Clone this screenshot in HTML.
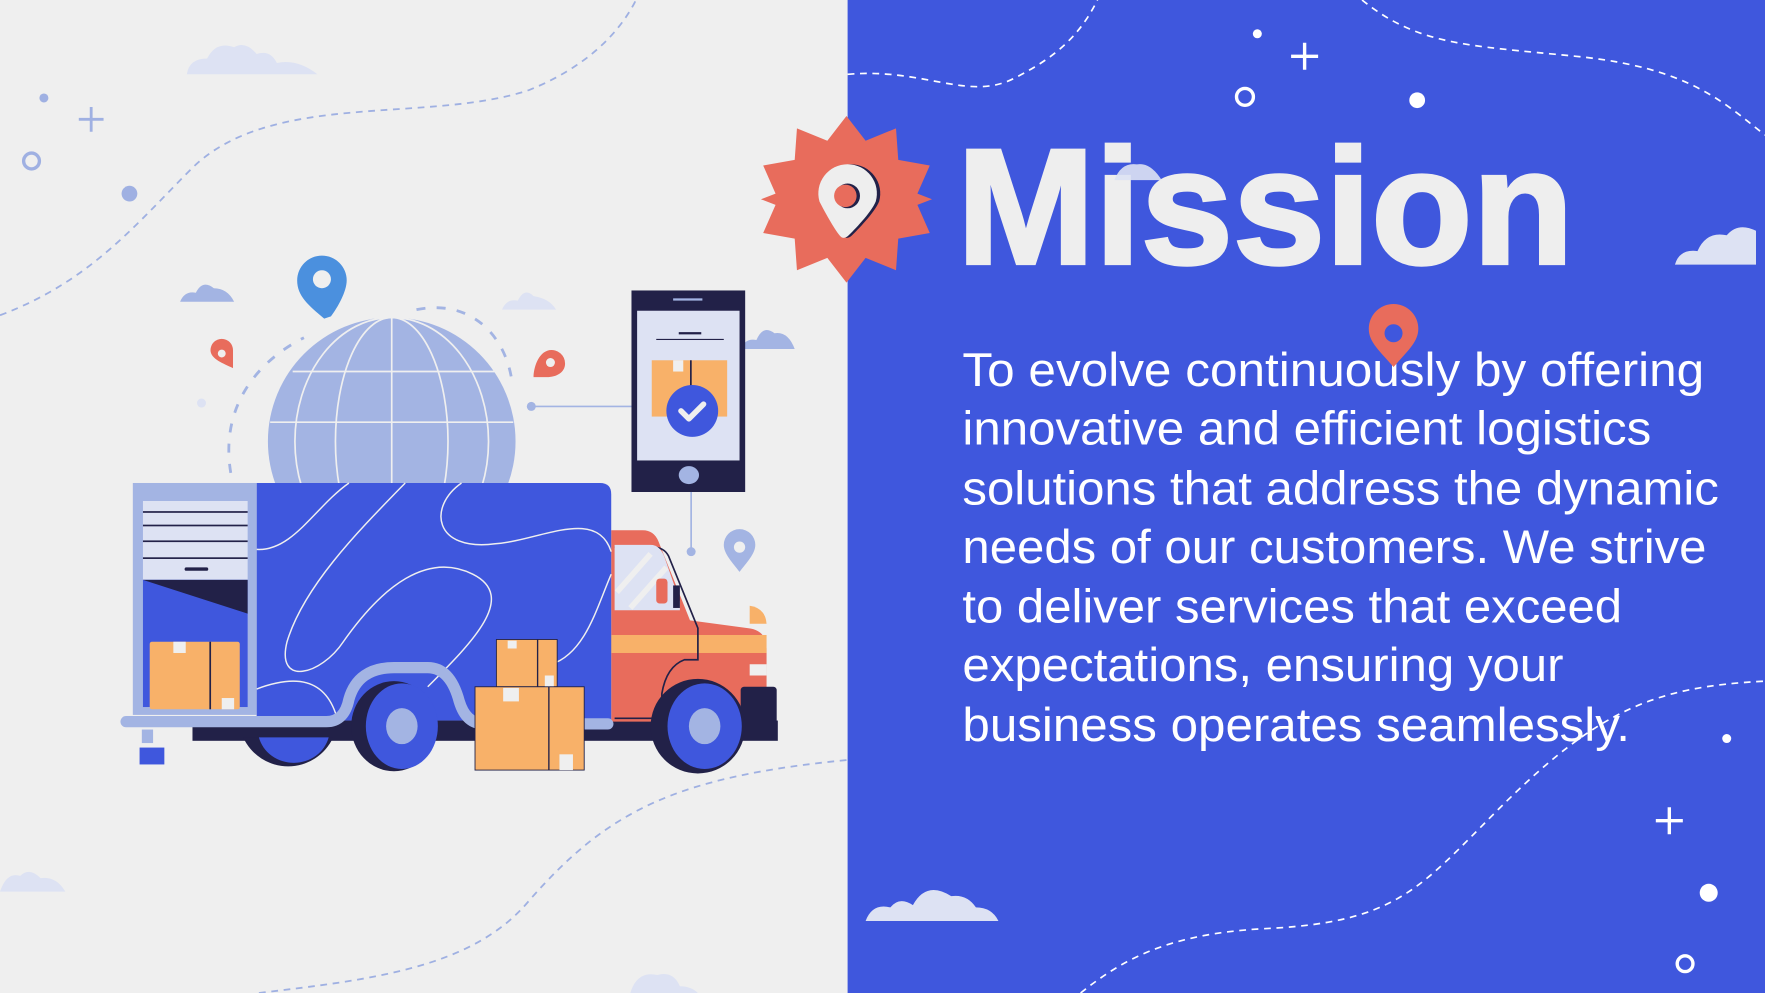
<!DOCTYPE html>
<html><head><meta charset="utf-8"><style>
html,body{margin:0;padding:0;background:#efefef;overflow:hidden}
svg{display:block}
</style></head><body>
<svg width="1765" height="993" viewBox="0 0 1568 882" preserveAspectRatio="none" xmlns="http://www.w3.org/2000/svg">
<rect width="1568" height="882" fill="#efefef"/>
<rect x="753" y="0" width="815" height="882" fill="#3f57dd"/>
<g fill="none" stroke="#9fb0e2" stroke-width="1.6" stroke-dasharray="6 5">
<path d="M0,280 C80,250 120,200 170,150 C240,80 380,110 470,80 C520,60 550,30 565,0"/>
<path d="M230,882 C330,870 420,860 470,800 C540,720 600,690 753,675"/>
</g>
<g fill="none" stroke="#ffffff" stroke-width="1.5" stroke-dasharray="6 5">
<path d="M753,66 C820,60 860,90 900,70 C940,50 960,30 975,0"/>
<path d="M1210,0 C1260,40 1300,40 1400,50 C1500,60 1530,90 1568,120"/>
<path d="M960,882 C1000,850 1040,830 1120,825 C1240,820 1260,790 1330,720 C1420,630 1470,610 1568,605"/>
</g>
<g fill="#9fb0e2" stroke="#9fb0e2">
<circle cx="39" cy="87" r="4" stroke="none"/>
<circle cx="115" cy="172" r="7" stroke="none"/>
<circle cx="28" cy="143" r="7" fill="none" stroke-width="3"/>
<path d="M70,106h22M81,95v22" stroke-width="2.5" fill="none"/>
</g>
<g fill="#dde2f3">
<path d="M166,66 q2,-14 18,-14 q8,-16 24,-10 q10,-6 20,6 q12,-4 18,8 q18,-4 36,10z"/>
<path d="M0,792 q6,-18 18,-14 q8,-8 18,2 q14,-2 22,12z"/>
<path d="M560,882 q6,-20 24,-16 q14,-4 20,10 q10,0 16,6z"/>
<path d="M446,275 q4,-10 14,-8 q6,-12 14,-4 q14,2 20,12z"/>
</g>
<g fill="#a3b4e3">
<path d="M160,268 q4,-10 14,-8 q6,-12 16,-4 q12,0 18,12z"/>
<path d="M658,310 q4,-10 14,-8 q6,-14 16,-6 q12,-2 18,14z"/>
</g>
<g fill="#fff" stroke="#fff">
<circle cx="1117" cy="30" r="4" stroke="none"/>
<circle cx="1259" cy="89" r="7" stroke="none"/>
<circle cx="1106" cy="86" r="7.5" fill="none" stroke-width="3"/>
<path d="M1147,50h24M1159,38v24" stroke-width="3" fill="none"/>
<circle cx="1534" cy="656" r="4" stroke="none"/>
<circle cx="1518" cy="793" r="8" stroke="none"/>
<circle cx="1497" cy="856" r="7" fill="none" stroke-width="3"/>
<path d="M1471,729h24M1483,717v24" stroke-width="3" fill="none"/>
</g>
<g fill="#dde2f3">
<path d="M769,818 q6,-16 22,-12 q8,-10 20,-2 q12,-22 34,-8 q14,-2 22,10 q14,0 20,12z"/>
<path d="M1488,235 q4,-14 20,-12 q8,-18 26,-14 q10,-12 26,-4 v30z"/>
</g>
<text x="850" y="234" font-family="Liberation Sans, sans-serif" font-weight="bold" font-size="146" fill="#eeeeee" stroke="#eeeeee" stroke-width="3" textLength="548" lengthAdjust="spacingAndGlyphs">Mission</text>
<path d="M990,160 q6,-16 20,-14 q12,-2 22,14z" fill="#dde2f3" opacity="0.9"/>
<g font-family="Liberation Sans, sans-serif" font-size="42" fill="#ffffff" lengthAdjust="spacingAndGlyphs">
<text x="855" y="343" textLength="659" lengthAdjust="spacingAndGlyphs">To evolve continuously by offering</text>
<text x="855" y="395" textLength="612" lengthAdjust="spacingAndGlyphs">innovative and efficient logistics</text>
<text x="855" y="448" textLength="672" lengthAdjust="spacingAndGlyphs">solutions that address the dynamic</text>
<text x="855" y="500" textLength="661" lengthAdjust="spacingAndGlyphs">needs of our customers. We strive</text>
<text x="855" y="553" textLength="586" lengthAdjust="spacingAndGlyphs">to deliver services that exceed</text>
<text x="855" y="605" textLength="534" lengthAdjust="spacingAndGlyphs">expectations, ensuring your</text>
<text x="855" y="658" textLength="593" lengthAdjust="spacingAndGlyphs">business operates seamlessly.</text>
</g>
<path d="M1238,326 c-12,-14 -22,-22 -22,-34 a22,22 0 0 1 44,0 c0,12 -10,20 -22,34z" fill="#e86c5c"/>
<circle cx="1238" cy="296" r="8" fill="#3f57dd"/>
<polygon fill="#e86c5c" points="752,103 769,125 796,114 798,142 826,147 815,172 828,177 815,182 826,207 798,212 796,240 769,229 752,251 735,229 708,240 706,212 678,207 689,182 676,177 689,172 678,147 706,142 708,114 735,125"/>
<path d="M748,211 c-4,-2 -16,-24 -20,-32 a26,26 0 1 1 50,0 c-4,10 -20,26 -24,30 q-3,3 -6,2z" fill="#222148" transform="translate(3,0)"/>
<path d="M748,211 c-4,-2 -16,-24 -20,-32 a26,26 0 1 1 50,0 c-4,10 -20,26 -24,30 q-3,3 -6,2z" fill="#eeeeee"/>
<circle cx="753" cy="174" r="11" fill="#222148"/>
<circle cx="751" cy="174" r="10" fill="#e86c5c"/>
<circle cx="348" cy="392" r="110" fill="#a3b4e3"/>
<g fill="none" stroke="#efefef" stroke-width="1.5">
<ellipse cx="348" cy="392" rx="86" ry="110"/>
<ellipse cx="348" cy="392" rx="50" ry="110"/>
<path d="M348,282v150M260,330h180M240,375h216"/>
</g>
<g fill="none" stroke="#a3b4e3" stroke-width="2.5" stroke-dasharray="8 10">
<path d="M205,420 C195,360 230,320 270,300 M370,275 C420,265 450,300 455,340"/>
</g>
<line x1="472" y1="361" x2="562" y2="361" stroke="#a3b4e3" stroke-width="1.5"/>
<circle cx="472" cy="361" r="4" fill="#a3b4e3"/>
<circle cx="179" cy="358" r="4" fill="#dde2f3"/>
<line x1="614" y1="435" x2="614" y2="490" stroke="#a3b4e3" stroke-width="1.5"/>
<circle cx="614" cy="490" r="4" fill="#a3b4e3"/>
<path d="M288,283 c-14,-12 -24,-20 -24,-34 a22,22 0 0 1 44,0 c0,10 -8,24 -14,32z" fill="#4b90de"/>
<circle cx="286" cy="248" r="8" fill="#efefef"/>
<path d="M207,327 c-8,-4 -20,-8 -20,-16 a10,10 0 0 1 20,0z" fill="#e86c5c"/>
<circle cx="197" cy="314" r="3.5" fill="#efefef"/>
<path d="M474,335 c0,-8 4,-22 14,-24 a12,12 0 0 1 14,12 c0,8 -8,12 -16,12z" fill="#e86c5c"/>
<circle cx="489" cy="322" r="4" fill="#efefef"/>
<path d="M657,508 c-6,-8 -14,-16 -14,-24 a14,14 0 0 1 28,0 c0,8 -8,16 -14,24z" fill="#a3b4e3"/>
<circle cx="657" cy="486" r="5" fill="#efefef"/>
<rect x="561" y="258" width="101" height="179" fill="#222148"/>
<rect x="566" y="276" width="91" height="133" fill="#dde2f3"/>
<rect x="598" y="265" width="26" height="2" fill="#a3b4e3"/>
<rect x="603" y="295" width="20" height="2" fill="#222148"/>
<rect x="583" y="301" width="60" height="1" fill="#222148"/>
<rect x="579" y="320" width="67" height="50" fill="#f8b169"/>
<rect x="598" y="320" width="9" height="10" fill="#efefef"/>
<rect x="613" y="320" width="1.5" height="30" fill="#222148"/>
<circle cx="615" cy="365" r="23" fill="#3f57dd"/>
<path d="M605,365 l7,7 l13,-13" stroke="#efefef" stroke-width="5" fill="none" stroke-linecap="round" stroke-linejoin="round"/>
<ellipse cx="612" cy="422" rx="9" ry="8" fill="#a3b4e3"/>
<rect x="171" y="640" width="520" height="18" fill="#222148"/>
<path d="M543,471 h28 q10,0 14,10 l28,70 l52,7 q16,2 16,18 v65 h-138z" fill="#e86c5c"/>
<rect x="543" y="564" width="138" height="16" fill="#f8b169"/>
<path d="M666,538 q14,2 15,16 h-15z" fill="#f8b169"/>
<path d="M546,486 h34 q10,0 14,8 l26,64 v28 h-12 q-16,6 -20,30 v22 h-42" fill="none" stroke="#222148" stroke-width="1.5"/>
<path d="M546,484 h32 q8,0 12,10 l14,40 v8 h-58z" fill="#dde2f3"/>
<path d="M548,526 l30,-34 M560,540 l32,-36" stroke="#efefef" stroke-width="5"/>
<rect x="583" y="514" width="10" height="22" rx="3" fill="#e86c5c"/>
<rect x="598" y="520" width="6" height="20" fill="#222148"/>
<rect x="666" y="590" width="15" height="10" fill="#efefef"/>
<rect x="658" y="610" width="32" height="38" rx="3" fill="#222148"/>
<path d="M228,429 h305 q10,0 10,10 v201 h-315z" fill="#3f57dd"/>
<g fill="none" stroke="#efefef" stroke-width="1.3">
<path d="M228,488 C260,490 280,450 310,429"/>
<path d="M360,429 C320,470 270,520 255,570 C245,610 285,600 305,570 C340,520 380,490 420,510 C460,530 420,570 380,610"/>
<path d="M410,429 C380,450 385,490 440,483 C480,480 530,450 543,490"/>
<path d="M228,612 C260,600 290,600 300,640"/>
<path d="M543,510 C530,540 520,580 490,590"/>
</g>
<rect x="118" y="429" width="110" height="206" fill="#a3b4e3"/>
<rect x="127" y="445" width="93" height="70" fill="#dde2f3"/>
<g fill="#222148">
<rect x="127" y="454" width="93" height="1.5"/><rect x="127" y="466" width="93" height="1.5"/>
<rect x="127" y="480" width="93" height="1.5"/><rect x="127" y="495" width="93" height="1.5"/>
<rect x="164" y="504" width="21" height="3" rx="1.5"/>
</g>
<rect x="127" y="515" width="93" height="113" fill="#3f57dd"/>
<path d="M127,515 h93 v30z" fill="#222148"/>
<rect x="133" y="570" width="80" height="60" rx="2" fill="#f8b169"/>
<rect x="154" y="570" width="11" height="10" fill="#efefef"/>
<rect x="186" y="570" width="1.5" height="60" fill="#222148"/>
<rect x="197" y="620" width="11" height="10" fill="#efefef"/>
<rect x="126" y="648" width="10" height="12" fill="#a3b4e3"/>
<rect x="124" y="664" width="22" height="15" fill="#3f57dd"/>
<path d="M112,641 H290 q16,0 20,-20 q8,-28 40,-28 h30 q20,0 28,30 q6,20 22,20 H540" fill="none" stroke="#a3b4e3" stroke-width="10" stroke-linecap="round"/>
<path d="M216,655 a44,44 0 0 0 80,0z" fill="#222148"/>
<path d="M230,655 a32,30 0 0 0 62,0z" fill="#3f57dd"/>
<ellipse cx="350" cy="645" rx="38" ry="40" fill="#222148"/>
<ellipse cx="357" cy="645" rx="32" ry="38" fill="#3f57dd"/>
<ellipse cx="357" cy="645" rx="14" ry="16" fill="#a3b4e3"/>
<ellipse cx="620" cy="645" rx="42" ry="42" fill="#222148"/>
<ellipse cx="626" cy="645" rx="33" ry="38" fill="#3f57dd"/>
<ellipse cx="626" cy="645" rx="14" ry="16" fill="#a3b4e3"/>
<rect x="441" y="568" width="54" height="42" fill="#f8b169" stroke="#222148" stroke-width="0.8"/>
<rect x="451" y="569" width="8" height="7" fill="#efefef"/>
<rect x="477" y="568" width="1.2" height="42" fill="#222148"/>
<rect x="484" y="600" width="8" height="10" fill="#efefef"/>
<rect x="422" y="610" width="97" height="74" fill="#f8b169" stroke="#222148" stroke-width="0.8"/>
<rect x="447" y="611" width="14" height="12" fill="#efefef"/>
<rect x="487" y="610" width="1.2" height="74" fill="#222148"/>
<rect x="497" y="670" width="12" height="14" fill="#efefef"/>
</svg>
</body></html>
